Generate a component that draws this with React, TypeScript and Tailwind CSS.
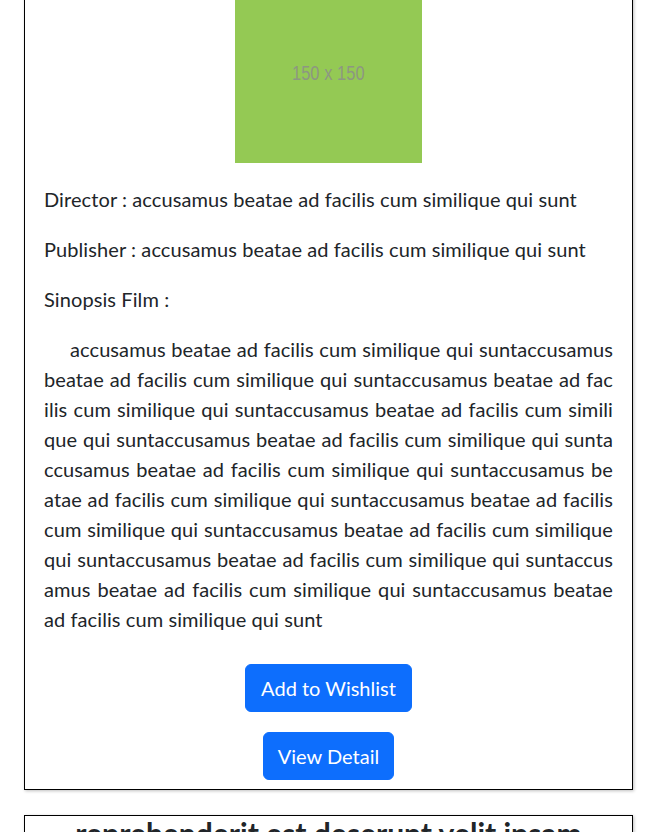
const TITLE_TEXT = 'accusamus beatae ad facilis cum similique qui sunt';

// Lines of the synopsis, broken where the reference breaks them (word-break: break-all).
const SYNOPSIS_LINES = [
  'accusamus beatae ad facilis cum similique qui suntaccusamus',
  'beatae ad facilis cum similique qui suntaccusamus beatae ad fac',
  'ilis cum similique qui suntaccusamus beatae ad facilis cum simili',
  'que qui suntaccusamus beatae ad facilis cum similique qui sunta',
  'ccusamus beatae ad facilis cum similique qui suntaccusamus be',
  'atae ad facilis cum similique qui suntaccusamus beatae ad facilis',
  'cum similique qui suntaccusamus beatae ad facilis cum similique',
  'qui suntaccusamus beatae ad facilis cum similique qui suntaccus',
  'amus beatae ad facilis cum similique qui suntaccusamus beatae',
  'ad facilis cum similique qui sunt',
];

function Placeholder() {
  return (
    <div className="mx-auto flex h-[187px] w-[187px] items-center justify-center bg-[#94c954]">
      <span className="inline-block translate-y-[3px] scale-x-[0.82] font-['Liberation_Sans',sans-serif] text-[20px] text-[#8d9782]">
        150 x 150
      </span>
    </div>
  );
}

function MovieCard() {
  return (
    <div className="mx-[24px] -mt-[45px] w-[609px] border border-black bg-white px-[19px] pb-[9px] pt-[20px] shadow-[1px_1px_3px_rgba(0,0,0,0.25)]">
      <Placeholder />

      <p className="mt-[21px] mb-[20px]">Director : {TITLE_TEXT}</p>
      <p className="mb-[20px]">Publisher : {TITLE_TEXT}</p>
      <p className="mb-[20px]">Sinopsis Film :</p>

      <div className="text-justify">
        {SYNOPSIS_LINES.map((line, i) => (
          <div
            key={i}
            className={
              i === SYNOPSIS_LINES.length - 1
                ? ''
                : i === 0
                  ? 'pl-[26px] [text-align-last:justify]'
                  : '[text-align-last:justify]'
            }
          >
            {line}
          </div>
        ))}
      </div>

      <div className="mt-[30px] flex flex-col items-center gap-[20px] tracking-normal">
        <button
          type="button"
          className="rounded-[6px] border border-[#0d6efd] bg-[#0d6efd] px-[15px] py-2 text-white"
        >
          Add to Wishlist
        </button>
        <button
          type="button"
          className="rounded-[6px] border border-[#0d6efd] bg-[#0d6efd] px-[14px] py-2 text-white"
        >
          View Detail
        </button>
      </div>
    </div>
  );
}

export default function App() {
  return (
    <div className="min-h-[832px] overflow-hidden bg-white font-['Lato','Noto_Sans',sans-serif] text-[20px] leading-[30px] tracking-[0.09px] text-[#212529]">
      <MovieCard />

      <div className="mx-[24px] mt-[25px] w-[609px] border border-black bg-white px-[19px] shadow-[1px_1px_3px_rgba(0,0,0,0.25)]">
        <h3 className="text-center text-[30px] font-bold leading-[34px] tracking-normal">
          reprehenderit est deserunt velit ipsam
        </h3>
      </div>
    </div>
  );
}
